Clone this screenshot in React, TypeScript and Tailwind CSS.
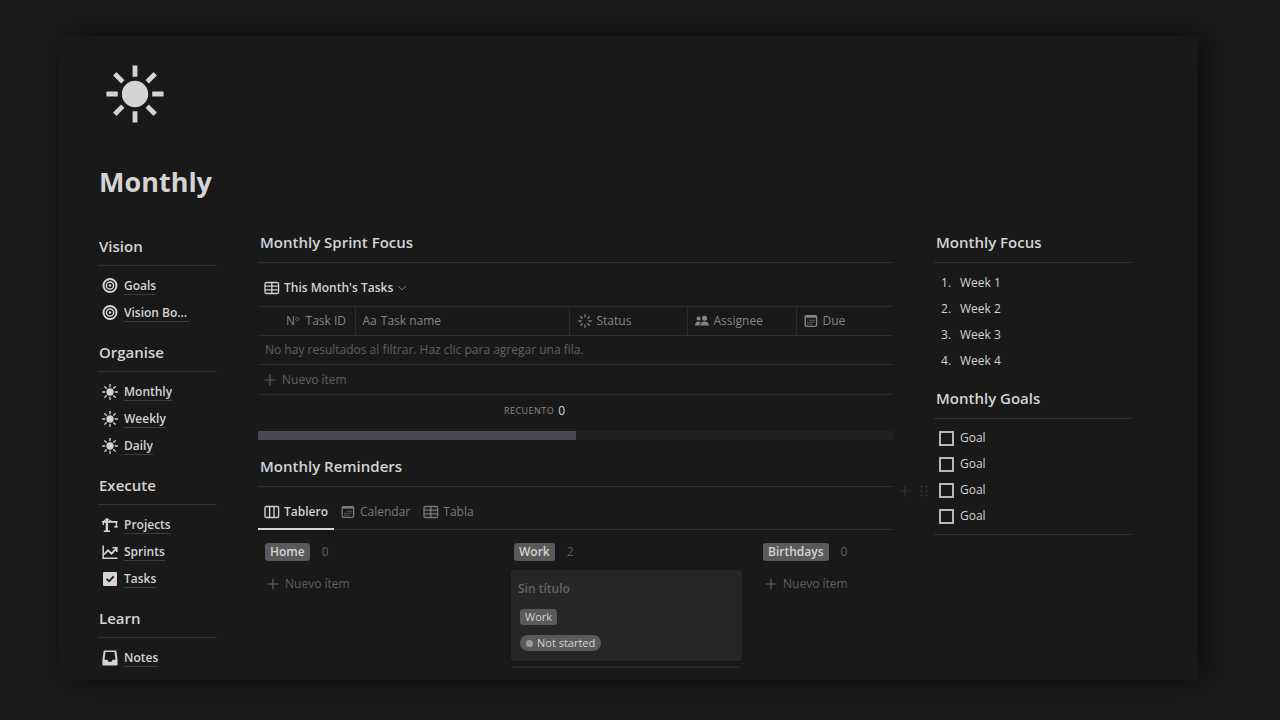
import type { ReactNode } from "react";

type IconProps = { className?: string };

function SunIcon({ className }: IconProps) {
  return (
    <svg viewBox="0 0 58 58" className={className} fill="currentColor" aria-hidden="true">
      <circle cx="29" cy="29" r="13.2" />
      {[0, 45, 90, 135, 180, 225, 270, 315].map((angle) => (
        <rect key={angle} x="26.6" y="0.4" width="4.8" height="11.4" rx="0.3" transform={`rotate(${angle} 29 29)`} />
      ))}
    </svg>
  );
}

function TargetIcon({ className }: IconProps) {
  return (
    <svg viewBox="0 0 16 16" className={className} fill="none" stroke="currentColor" aria-hidden="true">
      <circle cx="8" cy="7.5" r="6.5" strokeWidth="2" />
      <circle cx="8" cy="7.5" r="3.6" strokeWidth="1.5" />
      <circle cx="8" cy="7.5" r="1.3" fill="currentColor" stroke="none" />
    </svg>
  );
}

function CraneIcon({ className }: IconProps) {
  return (
    <svg viewBox="0 0 18 16" className={className} fill="none" stroke="currentColor" aria-hidden="true">
      <path d="M5.5 0.5v14.5" strokeWidth="2.6" />
      <path d="M0 4.5h17.500" strokeWidth="2" />
      <path d="M2 15h7" strokeWidth="1.8" />
      <path d="M1 4.5L5.500 1l6 3.200" strokeWidth="1.2" />
      <path d="M1.500 4v4M16.200 4v5.500" strokeWidth="1.500" />
      <path d="M14 10h3.600" strokeWidth="2" />
    </svg>
  );
}

function ChartIcon({ className }: IconProps) {
  return (
    <svg viewBox="0 0 16 16" className={className} fill="none" stroke="currentColor" aria-hidden="true">
      <path d="M1.2 1.5v12.8h14.3" strokeWidth="1.5" />
      <path d="M2 10.5l4-4.2 3.6 3.4 4.6-5" strokeWidth="1.8" />
      <path d="M10.6 3.7h4.2v4.2" strokeWidth="1.6" />
    </svg>
  );
}

function TaskIcon({ className }: IconProps) {
  return (
    <svg viewBox="0 0 16 16" className={className} aria-hidden="true">
      <rect x="1" y="1" width="14" height="14" rx="1" fill="currentColor" />
      <path d="M4.600 7.800l2.500 2.500 4.600-5" fill="none" stroke="#191919" strokeWidth="1.800" />
    </svg>
  );
}

function InboxIcon({ className }: IconProps) {
  return (
    <svg viewBox="0 0 16 16" className={className} aria-hidden="true">
      <path
        fill="currentColor"
        fillRule="evenodd"
        d="M2.6 0.400h10.800a1 1 0 0 1 1 .8L15.600 10v4.400a1 1 0 0 1-1 1H1.400a1 1 0 0 1-1-1V10L1.600 1.200a1 1 0 0 1 1-.8zM3.500 2L2.500 9.800h3c.3 1.400 1.200 2.200 2.500 2.200s2.200-.8 2.500-2.200h3L12.500 2z"
      />
    </svg>
  );
}

function TableIcon({ className }: IconProps) {
  return (
    <svg viewBox="0 0 16 14" className={className} fill="none" stroke="currentColor" strokeWidth="1.3" aria-hidden="true">
      <rect x="1" y="1.5" width="13.6" height="11" rx="1.6" />
      <path d="M1 5.2h13.6M1 8.8h13.6M7.8 1.5v11" />
    </svg>
  );
}

function BoardIcon({ className }: IconProps) {
  return (
    <svg viewBox="0 0 16 14" className={className} fill="none" stroke="currentColor" strokeWidth="1.4" aria-hidden="true">
      <rect x="1" y="1.5" width="13.6" height="11" rx="1.6" />
      <path d="M5.6 1.5v11M10 1.5v11" />
    </svg>
  );
}

function CalendarIcon({ className }: IconProps) {
  return (
    <svg viewBox="0 0 14 14" className={className} fill="none" stroke="currentColor" aria-hidden="true">
      <rect x="1.2" y="1.600" width="11.400" height="10.800" rx="1.600" strokeWidth="1.400" />
      <path d="M1.200 2.600h11.400" strokeWidth="2.200" />
      <path d="M5.4 6.2h5.4M3.2 8.2h7.6M3.2 10.2h5.4" strokeWidth="1.1" strokeDasharray="1.2 0.8" />
    </svg>
  );
}

function StatusIcon({ className }: IconProps) {
  return (
    <svg viewBox="0 0 14 14" className={className} fill="none" stroke="currentColor" strokeWidth="1.3" strokeLinecap="round" aria-hidden="true">
      {[0, 45, 90, 135, 180, 225, 270, 315].map((angle) => (
        <path key={angle} d="M7 0.8v2.3" transform={`rotate(${angle} 7 7)`} />
      ))}
    </svg>
  );
}

function PeopleIcon({ className }: IconProps) {
  return (
    <svg viewBox="0 0 14 12" className={className} fill="currentColor" aria-hidden="true">
      <circle cx="3.6" cy="3.600" r="2" />
      <path d="M0 10.500c0-2.600 1.500-4 3.600-4 0.900 0 1.500.2 2 .6C4.900 8 4.500 9.100 4.500 10.500z" />
      <circle cx="9.600" cy="3.200" r="2.500" />
      <path d="M5.300 10.500c0-2.700 1.800-4.100 4.300-4.100s4.300 1.400 4.300 4.100z" />
    </svg>
  );
}

function PlusIcon({ className }: IconProps) {
  return (
    <svg viewBox="0 0 12 12" className={className} fill="none" stroke="currentColor" strokeWidth="1.2" aria-hidden="true">
      <path d="M6 0.500v11M0.500 6h11" />
    </svg>
  );
}

const sections = [
  { title: "Vision", icon: TargetIcon, items: ["Goals", "Vision Board"] },
  { title: "Organise", icon: SunIcon, items: ["Monthly", "Weekly", "Daily"] },
  { title: "Execute", icon: null, items: ["Projects", "Sprints", "Tasks"] },
  { title: "Learn", icon: null, items: ["Notes"] },
];

const itemIcons: Record<string, (props: IconProps) => ReactNode> = {
  Projects: CraneIcon,
  Sprints: ChartIcon,
  Tasks: TaskIcon,
  Notes: InboxIcon,
};

function Sidebar() {
  return (
    <nav className="flex flex-col gap-[6px] pt-1">
      {sections.map((section) => (
        <section key={section.title}>
          <h2 className="flex h-[39px] items-center border-b border-[#303030] pl-px text-[15px] font-semibold">{section.title}</h2>
          <ul className="pt-[6px] pb-px">
            {section.items.map((item) => {
              const Icon = section.icon ?? itemIcons[item];
              return (
                <li key={item} className="flex h-[27px] items-center gap-[6px] pr-7 pl-1">
                  <Icon className="size-4 shrink-0" />
                  <a href="#" className="truncate border-b border-[#3a3a3a] pt-px text-xs leading-4 font-semibold">
                    {item}
                  </a>
                </li>
              );
            })}
          </ul>
        </section>
      ))}
    </nav>
  );
}

function SectionHeading({ children }: { children: ReactNode }) {
  return <h2 className="flex h-10 items-center border-b border-[#303030] pl-[2px] text-[15px] font-semibold">{children}</h2>;
}

const cell = "border-[#2c2c2c] p-0 text-left font-normal";

function TasksTable() {
  return (
    <>
      <button className="mt-3 mb-[6px] flex h-[25px] items-center gap-1 pl-[6px] text-xs font-semibold">
        <TableIcon className="h-[14px] w-4" />
        This Month's Tasks
        <svg viewBox="0 0 10 10" className="size-[10px] text-[#7a7a7a]" fill="none" stroke="currentColor" aria-hidden="true">
          <path d="M1.200 3l3.800 4 3.800-4" />
        </svg>
      </button>
      <table className="w-full table-fixed border-collapse text-xs">
        <colgroup>
          <col className="w-[97px]" />
          <col className="w-[214px]" />
          <col className="w-[118px]" />
          <col className="w-[109px]" />
          <col />
        </colgroup>
        <thead className="text-[#858585]">
          <tr className="h-[29px] border-y border-[#2c2c2c]">
            <th className={`${cell} border-r`}>
              <span className="flex items-center gap-[6px] pl-7">
                <span>Nº</span>Task ID
              </span>
            </th>
            <th className={`${cell} border-r`}>
              <span className="flex items-center gap-1 pl-[7px]">
                <span>Aa</span>Task name
              </span>
            </th>
            <th className={`${cell} border-r`}>
              <span className="flex items-center gap-[5px] pl-2">
                <StatusIcon className="size-[14px]" />
                Status
              </span>
            </th>
            <th className={`${cell} border-r`}>
              <span className="flex items-center gap-[5px] pl-[7px]">
                <PeopleIcon className="h-3 w-[14px]" />
                Assignee
              </span>
            </th>
            <th className={cell}>
              <span className="flex items-center gap-[5px] pl-[7px]">
                <CalendarIcon className="size-[14px]" />
                Due
              </span>
            </th>
          </tr>
        </thead>
        <tbody className="text-[#606060]">
          <tr className="h-[29px] border-b border-[#2c2c2c]">
            <td colSpan={5} className={cell}>
              <span className="pl-[7px]">No hay resultados al filtrar. Haz clic para agregar una fila.</span>
            </td>
          </tr>
          <tr className="h-[30px] border-b border-[#2c2c2c]">
            <td colSpan={5} className={cell}>
              <button className="flex items-center gap-[6px] pl-[6px]">
                <PlusIcon className="size-3" />
                Nuevo ítem
              </button>
            </td>
          </tr>
        </tbody>
      </table>
      <div className="flex h-9 w-[307px] items-center justify-end gap-1 pb-1">
        <span className="text-[9px] tracking-wider text-[#8a8a8a] uppercase">Recuento</span>
        <span className="text-xs">0</span>
      </div>
      <div className="h-[9px] bg-[#202020]">
        <div className="h-full w-1/2 bg-[#484c50]" />
      </div>
    </>
  );
}

function NewItem() {
  return (
    <button className="mt-[14px] flex h-[18px] items-center gap-[6px] pl-[5px] text-xs text-[#606060]">
      <PlusIcon className="size-3" />
      Nuevo ítem
    </button>
  );
}

function ColumnHeader({ name, count }: { name: string; count: number }) {
  return (
    <header className="flex h-[18px] items-center gap-3 pl-[3px] text-xs">
      <h3 className="rounded-[3px] bg-[#5a5a5a] px-[5px] leading-[18px] font-semibold">{name}</h3>
      <span className="text-[#606060]">{count}</span>
    </header>
  );
}

const card = "flex flex-col items-start rounded-[3px] bg-[#262626] px-[6px] py-[10px] shadow-[0_1px_3px_rgba(0,0,0,0.3)]";

function Board() {
  return (
    <div className="flex gap-[18px] overflow-hidden pt-[13px] pl-1">
      <section className="w-[231px] shrink-0">
        <ColumnHeader name="Home" count={0} />
        <NewItem />
      </section>
      <section className="w-[231px] shrink-0">
        <ColumnHeader name="Work" count={2} />
        <div className="flex flex-col gap-[5px] pt-[9px]">
          <article className={card}>
            <h4 className="pl-px text-xs leading-[18px] font-semibold text-[#666666]">Sin título</h4>
            <span className="mt-[11px] ml-[3px] rounded-[3px] bg-[#5a5a5a] px-[5px] text-[11px] leading-4">Work</span>
            <span className="mt-[10px] ml-[3px] flex items-center gap-1 rounded-full bg-[#5a5a5a] pr-[6px] pl-[6px] text-[11px] leading-4">
              <span className="size-[7px] rounded-full bg-[#9b9b9b]" />
              Not started
            </span>
          </article>
          <article className={card} />
        </div>
      </section>
      <section className="w-[231px] shrink-0">
        <ColumnHeader name="Birthdays" count={0} />
        <NewItem />
      </section>
    </div>
  );
}

function Reminders() {
  return (
    <>
      <div className="flex h-[43px] items-end gap-[7px] border-b border-[#303030] text-xs font-medium text-[#7a7a7a]">
        <button className="-mb-px flex h-[35px] items-center gap-1 border-b-2 border-[#d4d4d4] pr-[6px] pl-[6px] font-semibold text-[#d4d4d4]">
          <BoardIcon className="h-[14px] w-4" />
          Tablero
        </button>
        <button className="mb-px flex h-[33px] items-center gap-[5px] pr-[6px]">
          <CalendarIcon className="size-[14px]" />
          Calendar
        </button>
        <button className="mb-px flex h-[33px] items-center gap-1">
          <TableIcon className="h-[14px] w-4" />
          Tabla
        </button>
      </div>
      <Board />
    </>
  );
}

function FocusColumn() {
  return (
    <aside className="relative">
      <SectionHeading>Monthly Focus</SectionHeading>
      <ol className="pt-[7px] text-xs">
        {[1, 2, 3, 4].map((week) => (
          <li key={week} className="flex h-[26px] items-center pl-[7px]">
            <span className="w-[19px]">{week}.</span>
            Week {week}
          </li>
        ))}
      </ol>
      <div className="pt-[5px]">
        <SectionHeading>Monthly Goals</SectionHeading>
      </div>
      <ul className="border-b border-[#303030] pt-[6px] pb-[5px] text-xs">
        {[1, 2, 3, 4].map((goal) => (
          <li key={goal} className="h-[26px]">
            <label className="flex h-full items-center gap-[6px] pl-[5px]">
              <input type="checkbox" className="size-[15px] appearance-none border-2 border-[#b8b8b8]" />
              Goal
            </label>
          </li>
        ))}
      </ul>
      <div className="absolute top-[262px] -left-[35px] flex items-center gap-2 text-[#333333]">
        <PlusIcon className="size-3" />
        <svg viewBox="0 0 10 12" className="h-3 w-[10px]" fill="currentColor" aria-hidden="true">
          {[1.5, 6, 10.5].map((y) => (
            <g key={y}>
              <circle cx="2.5" cy={y} r="1.1" />
              <circle cx="7.5" cy={y} r="1.1" />
            </g>
          ))}
        </svg>
      </div>
    </aside>
  );
}

export default function App() {
  return (
    <div className="h-screen overflow-hidden bg-[#1b1b1b] pt-9 pr-[82px] pb-10 pl-[58px] font-['Open_Sans','Noto_Sans',sans-serif] text-[#d4d4d4]">
      <main className="h-full bg-[#191919] pr-[66px] pb-3 pl-10 shadow-[8px_0_30px_rgba(0,0,0,0.55)]">
        <div className="h-full overflow-hidden">
          <SunIcon className="mt-[29px] ml-2 size-[58px]" />
          <h1 className="mt-10 pl-px text-[27px] leading-[38px] font-bold">Monthly</h1>
          <div className="mt-[22px] grid grid-cols-[119px_minmax(0,1fr)_198px] gap-x-[41px]">
            <Sidebar />
            <div>
              <SectionHeading>Monthly Sprint Focus</SectionHeading>
              <TasksTable />
              <div className="pt-[7px]">
                <SectionHeading>Monthly Reminders</SectionHeading>
              </div>
              <Reminders />
            </div>
            <FocusColumn />
          </div>
        </div>
      </main>
    </div>
  );
}
